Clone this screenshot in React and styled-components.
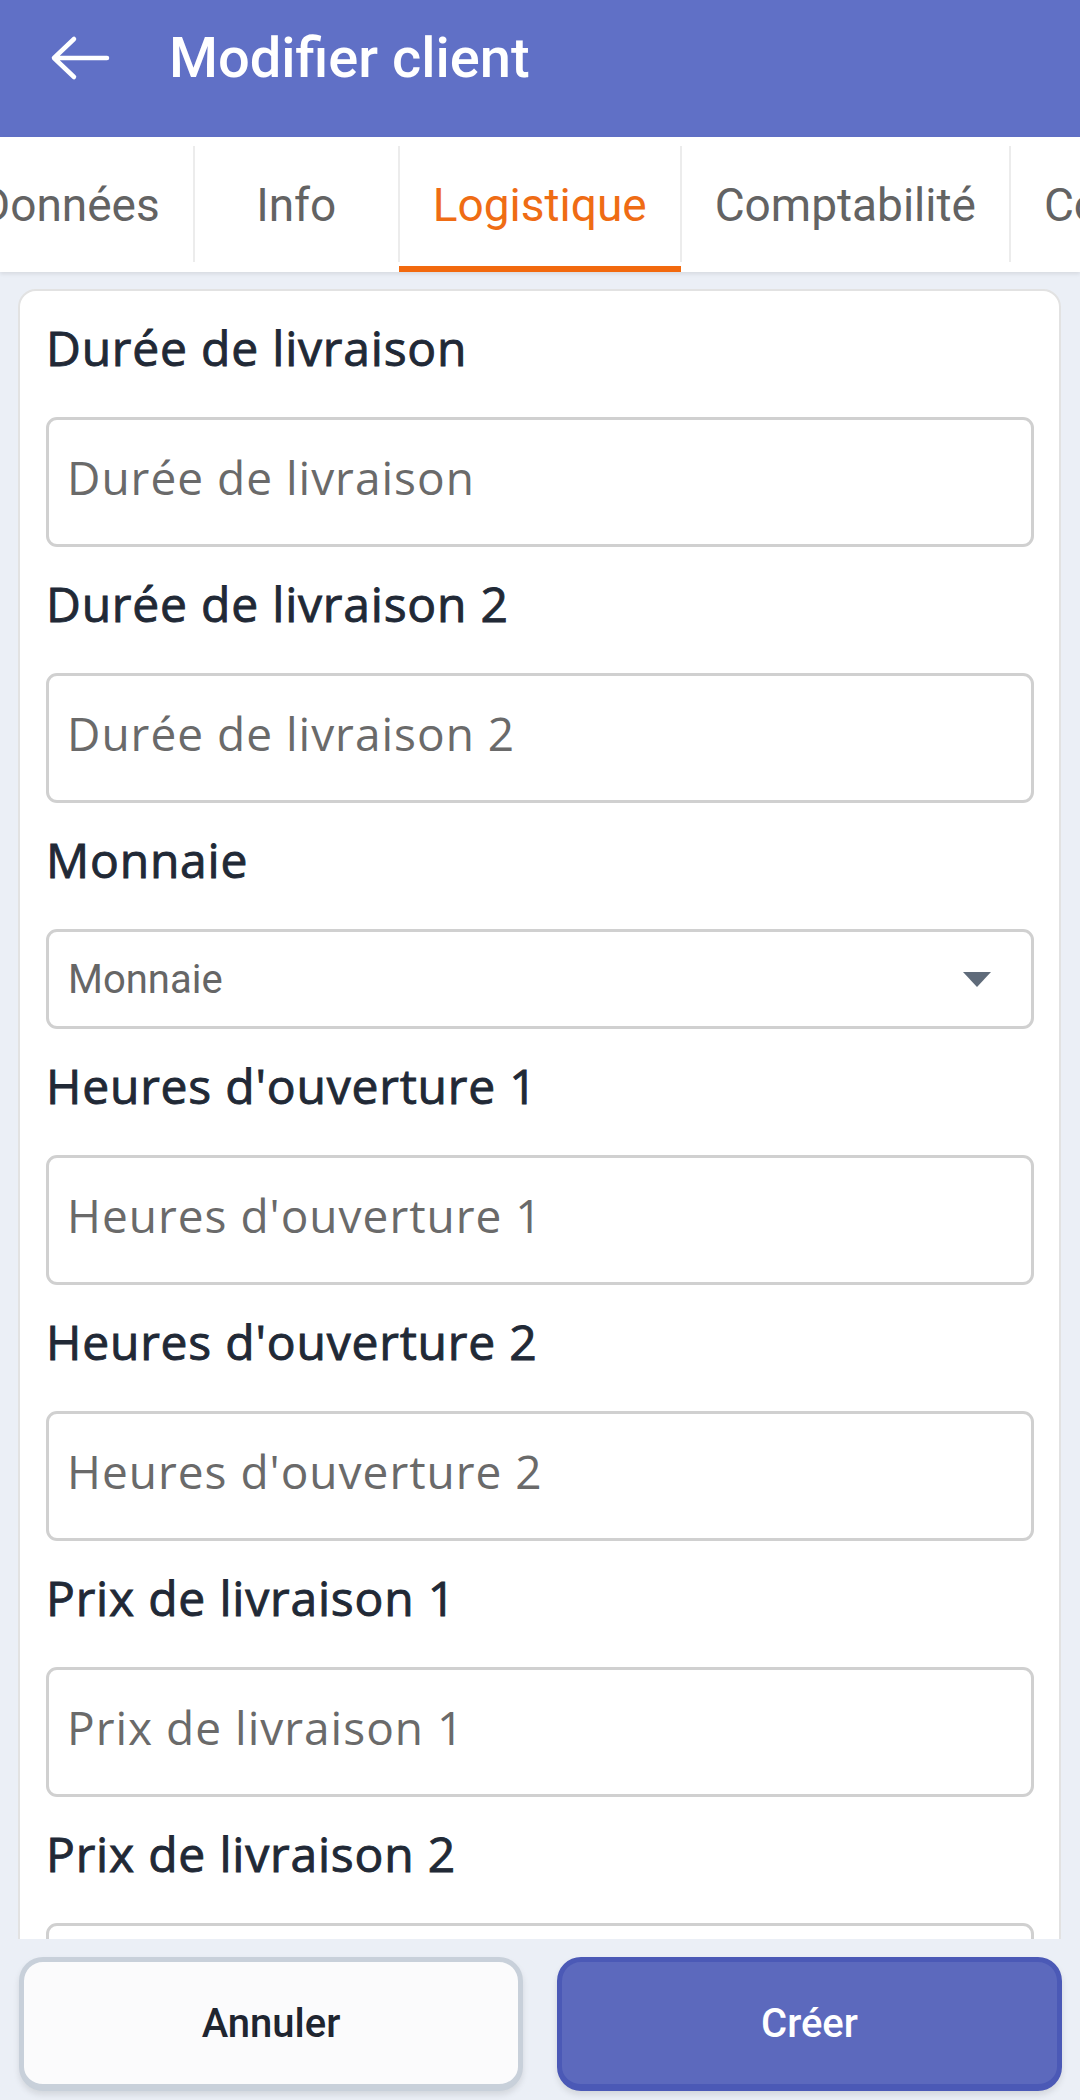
import React from 'react';
import styled, { createGlobalStyle } from 'styled-components';

const GlobalStyle = createGlobalStyle`
  * { box-sizing: border-box; }
  html, body { margin: 0; padding: 0; }
  body {
    background: #ebeff6;
    font-family: 'Roboto', 'Liberation Sans', sans-serif;
  }
`;

const Screen = styled.div`
  width: 1080px;
  height: 2100px;
  display: flex;
  flex-direction: column;
  background: #ebeff6;
  overflow: hidden;
`;

const Header = styled.header`
  height: 137px;
  flex-shrink: 0;
  background: #6070c6;
  display: flex;
  align-items: flex-start;
`;

const Toolbar = styled.div`
  height: 116px;
  display: flex;
  align-items: center;
  padding-left: 50px;
  gap: 57px;
`;

const BackButton = styled.button`
  width: 62px;
  height: 46px;
  padding: 0;
  border: none;
  background: none;
  display: flex;
  align-items: center;
  justify-content: center;
`;

const Title = styled.h1`
  margin: 0;
  font-family: 'Roboto', sans-serif;
  font-weight: 500;
  font-size: 56px;
  color: #ffffff;
`;

const TabBar = styled.nav`
  height: 135px;
  flex-shrink: 0;
  background: #ffffff;
  box-shadow: 0 2px 4px rgba(0, 0, 0, 0.09);
  overflow: hidden;
  position: relative;
  z-index: 1;
`;

const TabStrip = styled.div`
  display: flex;
  height: 100%;
  margin-left: -54px;
`;

const Tab = styled.div`
  position: relative;
  flex-shrink: 0;
  min-width: 205px;
  padding: 6px 34px 0;
  height: 100%;
  display: flex;
  align-items: center;
  justify-content: center;
  font-family: 'Roboto', sans-serif;
  font-size: 46px;
  color: ${p => (p.$active ? '#ef6c14' : '#636363')};
  border-bottom: 6px solid ${p => (p.$active ? '#f2690e' : 'transparent')};

  &::after {
    content: '';
    position: absolute;
    right: -1px;
    top: 9px;
    bottom: 4px;
    width: 2px;
    background: #ececec;
  }
`;

const Content = styled.main`
  flex: 1;
  overflow: hidden;
  padding: 17px 19px 0 18px;
`;

const Card = styled.section`
  background: #ffffff;
  border: 2px solid #e2e2e2;
  border-radius: 18px;
  padding: 0 25px 40px 26px;
`;

const Field = styled.div`
  display: flex;
  flex-direction: column;
`;

const Label = styled.label`
  margin: 29px 0 41px;
  height: 56px;
  line-height: 56px;
  font-family: 'Open Sans', sans-serif;
  font-weight: 400;
  font-size: 48px;
  letter-spacing: 0.8px;
  color: #212936;
  -webkit-text-stroke: 0.9px #212936;
`;

const Input = styled.input`
  height: 130px;
  width: 100%;
  border: 3px solid #d0d0d0;
  border-radius: 11px;
  padding: 0 18px 10px;
  font-family: 'Open Sans', sans-serif;
  font-size: 46px;
  letter-spacing: 1px;
  color: #333;
  background: #fff;
  outline: none;

  &::placeholder {
    color: #6a6a6a;
  }
`;

const Select = styled.div`
  height: 100px;
  border: 3px solid #d0d0d0;
  border-radius: 11px;
  padding: 0 40px 0 19px;
  display: flex;
  align-items: center;
  justify-content: space-between;
  font-family: 'Roboto', sans-serif;
  font-size: 40px;
  color: #666666;
`;

const Caret = styled.span`
  width: 0;
  height: 0;
  border-left: 14px solid transparent;
  border-right: 14px solid transparent;
  border-top: 15px solid #5f6b7a;
`;

const Footer = styled.footer`
  height: 161px;
  flex-shrink: 0;
  padding: 18px 18px 9px 19px;
  display: grid;
  grid-template-columns: 504px 505px;
  gap: 34px;
  background: #ebeff6;
`;

const Button = styled.button`
  height: 134px;
  border-radius: 24px;
  border: 5px solid ${p => (p.$primary ? '#4b59b6' : '#c8d0da')};
  border-bottom-width: 7px;
  background: ${p => (p.$primary ? '#5c69bd' : '#fbfbfc')};
  color: ${p => (p.$primary ? '#ffffff' : '#1f2530')};
  font-family: 'Roboto', sans-serif;
  font-weight: 500;
  font-size: 40px;
  box-shadow: 0 4px 6px rgba(0, 0, 0, 0.1);
`;

const tabs = ['Données', 'Info', 'Logistique', 'Comptabilité', 'Contacts'];

const fields = [
  { label: 'Durée de livraison' },
  { label: 'Durée de livraison 2' },
  { label: 'Monnaie', select: true },
  { label: "Heures d'ouverture 1" },
  { label: "Heures d'ouverture 2" },
  { label: 'Prix de livraison 1' },
  { label: 'Prix de livraison 2' },
  { label: 'Remarques logistique' },
];

const ArrowBack = () => (
  <svg width="62" height="46" viewBox="0 0 62 46" fill="none">
    <path
      d="M4 23H57M24 4L4 23L24 42"
      stroke="#ffffff"
      strokeWidth="4.5"
      strokeLinecap="round"
      strokeLinejoin="round"
    />
  </svg>
);

const App = () => {
  return (
    <Screen>
      <GlobalStyle />
      <Header>
        <Toolbar>
          <BackButton aria-label="Retour">
            <ArrowBack />
          </BackButton>
          <Title>Modifier client</Title>
        </Toolbar>
      </Header>
      <TabBar>
        <TabStrip>
          {tabs.map(t => (
            <Tab key={t} $active={t === 'Logistique'}>
              {t}
            </Tab>
          ))}
        </TabStrip>
      </TabBar>
      <Content>
        <Card>
          {fields.map(f => (
            <Field key={f.label}>
              <Label>{f.label}</Label>
              {f.select ? (
                <Select>
                  <span>{f.label}</span>
                  <Caret />
                </Select>
              ) : (
                <Input placeholder={f.label} />
              )}
            </Field>
          ))}
        </Card>
      </Content>
      <Footer>
        <Button>Annuler</Button>
        <Button $primary>Créer</Button>
      </Footer>
    </Screen>
  );
};

export default App;
